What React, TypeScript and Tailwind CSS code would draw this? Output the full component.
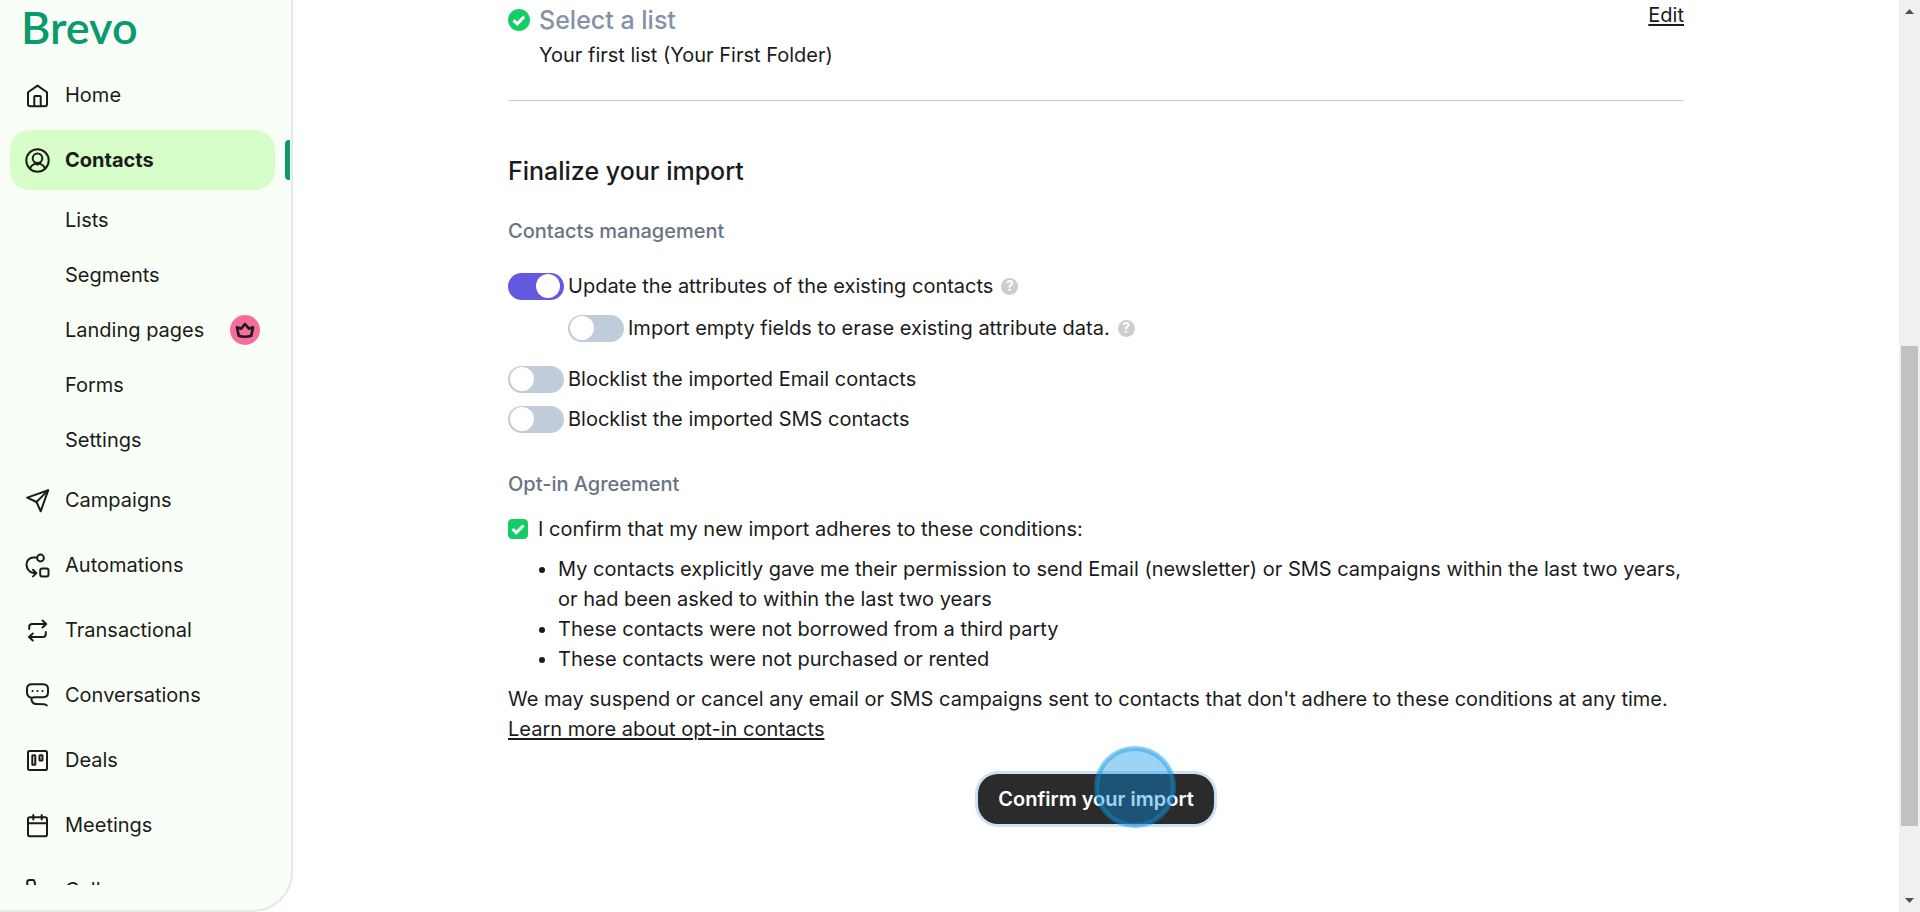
import { useState } from "react";
import type { ReactNode } from "react";

type NavItemProps = {
  label: string;
  icon: ReactNode;
  active?: boolean;
};

type SwitchRowProps = {
  id: string;
  label: string;
  defaultChecked?: boolean;
  help?: boolean;
};

function Icon({ children }: { children: ReactNode }) {
  return (
    <svg
      viewBox="0 0 25 25"
      className="size-[25px] shrink-0"
      fill="none"
      stroke="currentColor"
      strokeWidth="2"
      strokeLinecap="round"
      strokeLinejoin="round"
      aria-hidden="true"
    >
      {children}
    </svg>
  );
}

const homeItem: NavItemProps = {
  label: "Home",
  icon: (
    <Icon>
      <path d="M3 9.2 12.5 2.6 22 9.2V21a2.3 2.3 0 0 1-2.3 2.3H5.3A2.3 2.3 0 0 1 3 21Z" />
      <path d="M9.3 23v-9.3q0-.7.7-.7h5q.7 0 .7.7V23" />
    </Icon>
  ),
};

const contactsItem: NavItemProps = {
  label: "Contacts",
  active: true,
  icon: (
    <Icon>
      <circle cx="12.5" cy="12.5" r="11.2" />
      <circle cx="12.5" cy="10.3" r="4.8" />
      <path d="M4.8 20.4c1.2-2.3 3-3.7 5.3-4.7l2.4 1 2.4-1c2.3 1 4.1 2.4 5.3 4.7" />
    </Icon>
  ),
};

const subItems = ["Lists", "Segments", "Landing pages", "Forms", "Settings"];

const navItems: NavItemProps[] = [
  {
    label: "Campaigns",
    icon: (
      <Icon>
        <path d="M23.2 2.2 2.2 9.6l9.3 4.4 4.2 9.3Z" />
        <path d="M23 2.4 11.5 14" />
      </Icon>
    ),
  },
  {
    label: "Automations",
    icon: (
      <Icon>
        <circle cx="15.5" cy="5" r="3.4" />
        <rect x="15.2" y="15.5" width="8.3" height="8" rx="2" />
        <path d="M12 4.5H8.500C4.500 4.500 1.500 7.600 1.500 11.500s2.800 8 7 8.500h2.500" />
        <path d="m8 16.8 3.4 3.3L8 23.4" />
      </Icon>
    ),
  },
  {
    label: "Transactional",
    icon: (
      <Icon>
        <path d="M4.2 11V9a3 3 0 0 1 3-3h13.5" />
        <path d="m17.5 2.5 3.7 3.5-3.7 3.5" />
        <path d="M20.8 14v2a3 3 0 0 1-3 3H4.3" />
        <path d="M7.8 15.5 4.1 19l3.7 3.5" />
      </Icon>
    ),
  },
  {
    label: "Conversations",
    icon: (
      <Icon>
        <path d="M6.5 14.8C3.5 14.2 2 12.4 2 9.3V6c0-3 1.5-4.7 4.7-4.7h11.6C21.5 1.3 23 3 23 6v3.3c0 3-1.5 4.9-4.7 4.9h-9c-3 0-3.3 1.4-2.5 3.7.7 2.1 2 3 4 3l8 .3q2 .1 3 1.2" />
        <path d="M7.5 7.9h.1m4.9 0h.1m4.9 0h.1" />
      </Icon>
    ),
  },
  {
    label: "Deals",
    icon: (
      <Icon>
        <rect x="3" y="3" width="19" height="19" rx="1.5" />
        <rect x="7.3" y="7.2" width="3" height="9.5" rx=".5" />
        <rect x="14.5" y="7.2" width="3" height="5.3" rx=".5" />
      </Icon>
    ),
  },
  {
    label: "Meetings",
    icon: (
      <Icon>
        <rect x="3" y="4.2" width="19" height="19" rx="1.8" />
        <path d="M3 10.3h19M8.300 2v4.500M16.700 2v4.500" />
      </Icon>
    ),
  },
  {
    label: "Calls",
    icon: (
      <Icon>
        <path d="M4.5 2h3.3q1.5 0 1.7 1.5l.6 3.5q.2 1.2-.7 2L7.5 10.500a17 17 0 0 0 7 7l1.500-1.900q.8-.9 2-.7l3.500.6q1.500.2 1.500 1.700v3.300q0 2.300-2.300 2.300C10.500 22.500 2.200 14.500 2.200 4.300 2.200 2.800 3 2 4.500 2Z" />
      </Icon>
    ),
  },
];

const conditions = [
  "My contacts explicitly gave me their permission to send Email (newsletter) or SMS campaigns within the last two years, or had been asked to within the last two years",
  "These contacts were not borrowed from a third party",
  "These contacts were not purchased or rented",
];

function NavItem({ label, icon, active }: NavItemProps) {
  return (
    <li className="relative pl-2.5 pr-4">
      <a
        href="#"
        aria-current={active ? "page" : undefined}
        className={
          active
            ? "flex h-[60px] items-center gap-[15px] rounded-[20px] bg-[#d7fec8] px-[15px] font-bold"
            : "flex h-[60px] items-center gap-[15px] rounded-[20px] px-[15px]"
        }
      >
        {icon}
        {label}
      </a>
      {active && (
        <span className="absolute right-[1px] top-2.5 h-10 w-[5px] rounded-l bg-[#0b996e]" />
      )}
    </li>
  );
}

function CrownBadge() {
  return (
    <svg viewBox="0 0 30 30" className="size-[30px]" aria-hidden="true">
      <circle cx="15" cy="15" r="15" fill="#f76c9c" />
      <path
        d="M7 12.2 8.7 20.8q3.2.9 6.3.9t6.3-.9L23 12.2l-4.1 1.5L15 9l-3.9 4.7Z"
        fill="none"
        stroke="#1b1b1b"
        strokeWidth="2.6"
        strokeLinejoin="round"
      />
    </svg>
  );
}

function Sidebar() {
  return (
    <aside className="flex h-full w-[293px] shrink-0 flex-col overflow-hidden rounded-br-[40px] border-b-2 border-r-2 border-[#deebe7] bg-[#f9fff6] pb-[25px]">
      <a
        href="#"
        className="flex h-[65px] shrink-0 items-start pl-[21px] font-[Lato] text-[45px] font-semibold leading-[54px] text-[#0b996e]"
      >
        Brevo
      </a>
      <nav className="min-h-0 flex-1 overflow-hidden">
        <ul className="flex flex-col gap-[5px]">
          <NavItem {...homeItem} />
          <NavItem {...contactsItem} />
          {subItems.map((item) => (
            <li key={item} className="pl-2.5 pr-4">
              <a
                href="#"
                className="flex h-[50px] items-center justify-between pl-[55px] pr-[15px]"
              >
                {item}
                {item === "Landing pages" && <CrownBadge />}
              </a>
            </li>
          ))}
          {navItems.map((item) => (
            <NavItem key={item.label} {...item} />
          ))}
        </ul>
      </nav>
    </aside>
  );
}

function HelpIcon() {
  return (
    <span className="ml-2 flex size-[17px] items-center justify-center rounded-full bg-[#cdcdcd] text-sm font-bold leading-none text-white">
      ?
    </span>
  );
}

function SwitchRow({ id, label, defaultChecked, help }: SwitchRowProps) {
  return (
    <div className="flex h-[30px] items-center">
      <input
        id={id}
        type="checkbox"
        role="switch"
        defaultChecked={defaultChecked}
        className="flex h-[27px] w-14 shrink-0 cursor-pointer appearance-none items-center rounded-full bg-[#c0ccda] px-0.5 before:size-6 before:rounded-full before:bg-white checked:justify-end checked:bg-[#6358de] checked:px-1"
      />
      <label htmlFor={id} className="ml-1 cursor-pointer">
        {label}
      </label>
      {help && <HelpIcon />}
    </div>
  );
}

function ImportForm() {
  const [agreed, setAgreed] = useState(true);

  return (
    <div className="w-full max-w-[1176px]">
      {/* Completed step */}
      <section className="flex items-start justify-between border-b border-[#c0ccda] pb-[30px]">
        <div className="flex gap-[9px]">
          <svg viewBox="0 0 22 22" className="mt-[9px] size-[22px]" aria-hidden="true">
            <circle cx="11" cy="11" r="11" fill="#13ce66" />
            <path d="m5.5 11.3 3.7 3.5 7-7.2" fill="none" stroke="#fff" strokeWidth="3" />
          </svg>
          <div>
            <h2 className="text-[25px] font-medium leading-10 text-[#8492a6]">
              Select a list
            </h2>
            <p>Your first list (Your First Folder)</p>
          </div>
        </div>
        <a href="#" className="underline decoration-2 underline-offset-2">
          Edit
        </a>
      </section>

      <h2 className="mt-[50px] text-[25px] font-medium leading-10">
        Finalize your import
      </h2>

      <h3 className="mt-[25px] font-medium text-[#687484]">Contacts management</h3>
      <div className="mt-[25px] flex flex-col gap-2.5">
        <SwitchRow
          id="update"
          label="Update the attributes of the existing contacts"
          defaultChecked
          help
        />
        <div className="mb-[11px] mt-0.5 pl-[60px]">
          <SwitchRow
            id="erase"
            label="Import empty fields to erase existing attribute data."
            help
          />
        </div>
        <SwitchRow id="email" label="Blocklist the imported Email contacts" />
        <SwitchRow id="sms" label="Blocklist the imported SMS contacts" />
      </div>

      <h3 className="mt-[35px] font-medium text-[#687484]">Opt-in Agreement</h3>
      <div className="mt-[15px] flex items-center gap-2.5">
        <span className="relative flex">
          <input
            id="agree"
            type="checkbox"
            checked={agreed}
            onChange={(e) => setAgreed(e.target.checked)}
            className="size-5 cursor-pointer appearance-none rounded border border-[#c0ccda] checked:border-[#13ce66] checked:bg-[#13ce66]"
          />
          {agreed && (
            <svg
              viewBox="0 0 20 20"
              className="pointer-events-none absolute inset-0"
              aria-hidden="true"
            >
              <path d="m4.5 10 3.7 3.6 7.3-7.1" fill="none" stroke="#fff" strokeWidth="3" />
            </svg>
          )}
        </span>
        <label htmlFor="agree">
          I confirm that my new import adheres to these conditions:
        </label>
      </div>
      <ul className="mt-2.5 list-disc pl-[50px]">
        {conditions.map((condition) => (
          <li key={condition}>{condition}</li>
        ))}
      </ul>
      <p className="mt-2.5">
        We may suspend or cancel any email or SMS campaigns sent to contacts
        that don't adhere to these conditions at any time.{" "}
        <a href="#" className="block w-fit underline decoration-2 underline-offset-2">
          Learn more about opt-in contacts
        </a>
      </p>

      <div className="mt-[30px] flex justify-center">
        <div className="relative">
          <button
            type="button"
            className="h-[50px] rounded-[20px] bg-[#2b2b2b] px-5 font-semibold text-white ring-[3px] ring-[#cde0f5]"
          >
            Confirm your import
          </button>
          {/* Click highlight */}
          <span className="pointer-events-none absolute -top-7 left-[116px] size-[82px] rounded-full border-2 border-[#0a94e6]/10 bg-[#0a94e6]/40">
            <span className="block size-full rounded-full border-[3px] border-[#0a94e6]/40" />
          </span>
        </div>
      </div>
    </div>
  );
}

function ScrollBar() {
  return (
    <div className="flex h-full w-[21px] shrink-0 flex-col items-center bg-[#f0f0f0]" aria-hidden="true">
      <svg viewBox="0 0 21 21" className="size-[21px] shrink-0">
        <path d="M6 14h9l-4.5-5Z" fill="#505050" />
      </svg>
      <div className="flex-[325]" />
      <div className="w-[17px] flex-[480] bg-[#c1c1c1]" />
      <div className="flex-[65]" />
      <svg viewBox="0 0 21 21" className="size-[21px] shrink-0">
        <path d="M6 7h9l-4.5 5Z" fill="#505050" />
      </svg>
    </div>
  );
}

function App() {
  return (
    <div className="flex h-screen overflow-hidden bg-white font-[Inter,sans-serif] text-xl leading-[30px] text-[#1b1b1b]">
      <Sidebar />
      <main className="flex min-w-0 flex-1 justify-center overflow-hidden">
        <ImportForm />
      </main>
      <ScrollBar />
    </div>
  );
}

export default App;
